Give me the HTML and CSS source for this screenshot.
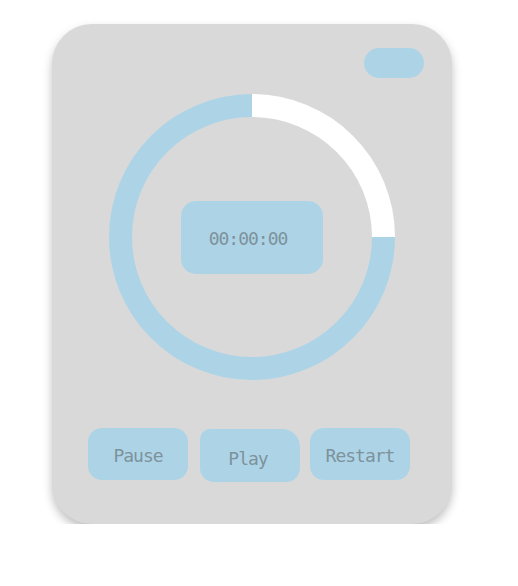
FILE: index.html
```html
<!DOCTYPE html>
<html lang="en">
<head>
  <meta charset="UTF-8">
  <title>Timer</title>
  <link rel="stylesheet" href="styles.css">
</head>
<body>

<div class="timer">
  <div class="top-bar">
    <button class="toggle"></button>
  </div>

  <div class="ring">
    <div class="ring-inner">
      <div class="display">00:00:00</div>
    </div>
  </div>

  <div class="controls">
    <button class="btn">Pause</button>
    <button class="btn play">Play</button>
    <button class="btn">Restart</button>
  </div>
</div>

</body>
</html>
```

FILE: styles.css
```css
body {
  font-family: 'DejaVu Sans Mono', monospace;
  background: #fff;
  margin: 0;
  padding: 24px 0 0 52px;
}

.timer {
  width: 400px;
  height: 500px;
  box-sizing: border-box;
  padding: 24px 28px 0;
  background: #d9d9d9;
  border-radius: 40px;
  box-shadow: 0 5px 10px rgba(0, 0, 0, 0.25);
  display: flex;
  flex-direction: column;
  align-items: center;
}

.top-bar {
  align-self: stretch;
  display: flex;
  justify-content: flex-end;
}

.toggle {
  width: 60px;
  height: 30px;
  border: none;
  border-radius: 15px;
  background: #add4e6;
  padding: 0;
}

.ring {
  margin-top: 16px;
  width: 286px;
  height: 286px;
  border-radius: 50%;
  background: conic-gradient(#fff 0 25%, #add4e6 0);
  display: flex;
  justify-content: center;
  align-items: center;
}

.ring-inner {
  width: 240px;
  height: 240px;
  border-radius: 50%;
  background: #d9d9d9;
  display: flex;
  justify-content: center;
  align-items: center;
}

.display {
  width: 142px;
  height: 73px;
  border-radius: 15px;
  background: #add4e6;
  color: #7d929c;
  font-size: 18px;
  letter-spacing: -1px;
  display: flex;
  justify-content: center;
  align-items: center;
  padding-right: 8px;
  padding-top: 2px;
  box-sizing: border-box;
}

.controls {
  margin-top: 48px;
  display: flex;
  align-items: flex-start;
  margin-right: 6px;
}

.btn {
  width: 100px;
  height: 52px;
  border: none;
  border-radius: 14px;
  background: #add4e6;
  color: #7d929c;
  font-family: 'DejaVu Sans Mono', monospace;
  font-size: 18px;
  letter-spacing: -1px;
  padding: 3px 0 0;
}

.btn + .btn {
  margin-left: 10px;
}

.play {
  margin-left: 12px !important;
  margin-top: 1px;
  height: 53px;
  padding: 6px 4px 0 0;
  border-radius: 10px 18px 14px 14px;
}
```
